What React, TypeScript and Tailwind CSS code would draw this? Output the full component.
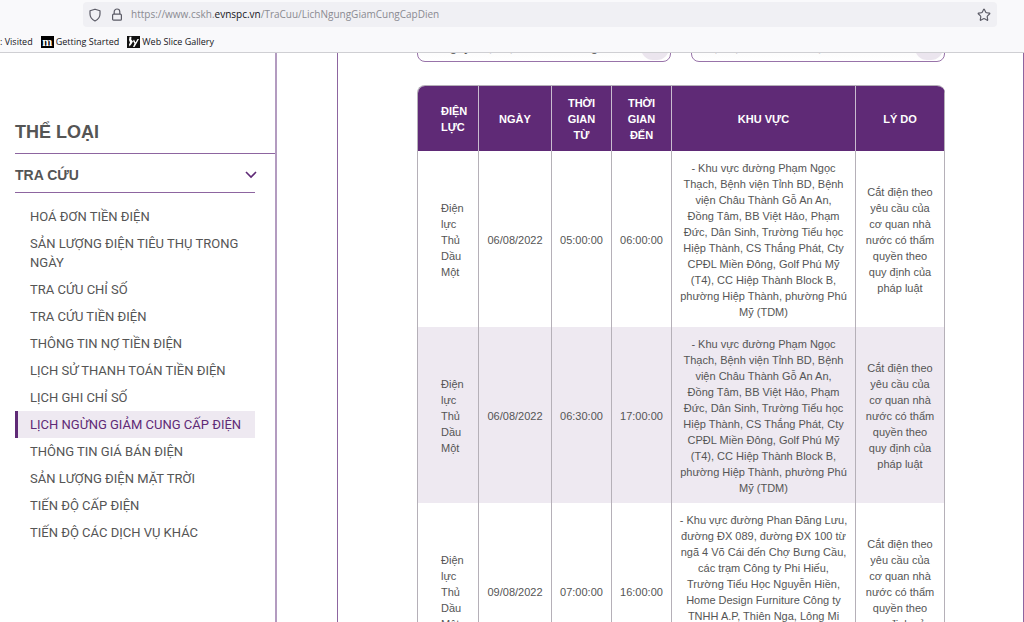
import { useState } from 'react';
import { Star } from 'lucide-react';

type Outage = {
  id: number;
  unit: string;
  date: string;
  from: string;
  to: string;
  area: string;
  reason: string;
};

const REASON = 'Cắt điện theo yêu cầu của cơ quan nhà nước có thẩm quyền theo quy định của pháp luật';
const AREA_PHU_MY = [
  '- Khu vực đường Phạm Ngọc',
  'Thạch, Bệnh viện Tỉnh BD, Bệnh',
  'viện Châu Thành Gỗ An An,',
  'Đồng Tâm, BB Việt Hảo, Phạm',
  'Đức, Dân Sinh, Trường Tiểu học',
  'Hiệp Thành, CS Thắng Phát, Cty',
  'CPĐL Miền Đông, Golf Phú Mỹ',
  '(T4), CC Hiệp Thành Block B,',
  'phường Hiệp Thành, phường Phú',
  'Mỹ (TDM)',
].join('\n');
const AREA_DX = [
  '- Khu vực đường Phan Đăng Lưu,',
  'đường ĐX 089, đường ĐX 100 từ',
  'ngã 4 Võ Cái đến Chợ Bưng Cầu,',
  'các trạm Công ty Phi Hiếu,',
  'Trường Tiểu Học Nguyễn Hiền,',
  'Home Design Furniture Công ty',
  'TNHH A.P, Thiên Nga, Lông Mi',
].join('\n');

const outages: Outage[] = [
  { id: 1, unit: 'Điện lực Thủ Dầu Một', date: '06/08/2022', from: '05:00:00', to: '06:00:00', area: AREA_PHU_MY, reason: REASON },
  { id: 2, unit: 'Điện lực Thủ Dầu Một', date: '06/08/2022', from: '06:30:00', to: '17:00:00', area: AREA_PHU_MY, reason: REASON },
  { id: 3, unit: 'Điện lực Thủ Dầu Một', date: '09/08/2022', from: '07:00:00', to: '16:00:00', area: AREA_DX, reason: REASON },
];

const menu = [
  'HOÁ ĐƠN TIỀN ĐIỆN',
  'SẢN LƯỢNG ĐIỆN TIÊU THỤ TRONG NGÀY',
  'TRA CỨU CHỈ SỐ',
  'TRA CỨU TIỀN ĐIỆN',
  'THÔNG TIN NỢ TIỀN ĐIỆN',
  'LỊCH SỬ THANH TOÁN TIỀN ĐIỆN',
  'LỊCH GHI CHỈ SỐ',
  'LỊCH NGỪNG GIẢM CUNG CẤP ĐIỆN',
  'THÔNG TIN GIÁ BÁN ĐIỆN',
  'SẢN LƯỢNG ĐIỆN MẶT TRỜI',
  'TIẾN ĐỘ CẤP ĐIỆN',
  'TIẾN ĐỘ CÁC DỊCH VỤ KHÁC',
];

function BrowserBar() {
  return (
    <header className="shrink-0 border-b border-[#cfcfd3] bg-[#f9f9fb] font-['Open_Sans',sans-serif]">
      <div className="pt-[2px] pr-[27px] pl-[83px]">
        <div className="flex h-[25px] items-center rounded-sm bg-[#f0f0f4] px-1.5 text-[10px] text-[#8a8a91]">
          <svg viewBox="0 0 12 14" className="h-3.5 w-3 shrink-0" fill="none" stroke="#5b5b66" strokeWidth="1.2" strokeLinejoin="round">
            <path d="M6 1.2 11 2.8V6c0 3.2-1.8 5.4-5 7C2.8 11.4 1 9.2 1 6V2.8Z" />
          </svg>
          <svg viewBox="0 0 12 14" className="ml-2.5 h-3.5 w-3 shrink-0" fill="none" stroke="#5b5b66" strokeWidth="1.2">
            <rect x="1.6" y="6.2" width="8.8" height="6" rx="1" />
            <path d="M3.2 6V3.8a2.8 2.8 0 0 1 5.6 0V6" />
          </svg>
          <p className="ml-2 flex-1 truncate">
            https://www.cskh.<span className="text-[#15141a]">evnspc.vn</span>/TraCuu/LichNgungGiamCungCapDien
          </p>
          <button type="button" aria-label="Bookmark">
            <Star className="size-3.5 text-[#5b5b66]" strokeWidth={2} />
          </button>
        </div>
      </div>
      <nav className="flex h-[25px] items-center gap-2 pt-1 text-[9px] text-[#15141a]">
        <a href="#visited">: Visited</a>
        <a href="#start" className="flex items-center gap-[2px]">
          <span className="flex h-3 w-[13px] items-center justify-center bg-black font-['Liberation_Serif',serif] text-[12px] leading-none font-bold text-white">
            m
          </span>
          Getting Started
        </a>
        <a href="#slice" className="flex items-center gap-[2px]">
          <svg viewBox="0 0 13 12" className="h-3 w-[13px]">
            <rect width="13" height="12" fill="#111" />
            <path d="M2.500 .8h2L4.200 3.500 6 5.500 4.500 8 2.500 10.500 2 8.500l1-2L2 4ZM7 3.500l1.500 3L10.500 3H12L9.500 7.500 7.500 11H6L7.500 7.500 6 5Z" fill="#fff" />
          </svg>
          Web Slice Gallery
        </a>
      </nav>
    </header>
  );
}

function Sidebar() {
  const [active, setActive] = useState(menu[7]);

  return (
    <aside className="w-[277px] shrink-0 border-r-2 border-[#b39bc0] pl-[15px] text-[#555]">
      <h2 className="border-b border-[#8d65a0] pt-[67px] pb-[9px] text-[18px] leading-6 font-bold">THỂ LOẠI</h2>
      <div className="pr-[20px]">
        <button
          type="button"
          className="flex w-full items-center justify-between border-b border-[#8d65a0] pt-3 pb-2 text-[14px] leading-[18px] font-bold"
        >
          TRA CỨU
          <svg viewBox="0 0 12 8" className="-mr-0.5 h-2 w-3" fill="none" stroke="#5f2a76" strokeWidth="1.6">
            <path d="m1 1 5 5 5-5" />
          </svg>
        </button>
        <ul className="pt-[10px] font-['Roboto','Liberation_Sans',sans-serif]">
          {menu.map((item) => (
            <li key={item}>
              <a
                href="#lich"
                onClick={() => setActive(item)}
                className={`block border-l-[3px] py-1 pl-3 text-[13px] leading-[19px] ${
                  item === active ? 'border-[#5f2a76] bg-[#eee9f1] text-[#5f2a76]' : 'border-transparent'
                }`}
              >
                {item}
              </a>
            </li>
          ))}
        </ul>
      </div>
    </aside>
  );
}

function Filter({ label, value }: { label: string; value: string }) {
  return (
    <label className="relative block flex-1">
      <select
        aria-label={label}
        className="block h-9 w-full appearance-none rounded-lg border border-[#9873a9] bg-linear-to-b from-[#f5f5f5] to-white pt-1.5 pl-2 text-[13px] text-[#555]"
      >
        <option>{value}</option>
      </select>
      <span className="pointer-events-none absolute inset-y-0.5 right-0.5 w-7 rounded-xl bg-[#ebe5ee]" />
    </label>
  );
}

export default function App() {
  return (
    <div className="flex h-screen flex-col overflow-hidden bg-white font-['Liberation_Sans',Arial,sans-serif]">
      <BrowserBar />
      <div className="flex min-h-0 flex-1 gap-[60px] overflow-hidden">
        <Sidebar />
        <main className="min-w-0 flex-1 border-x border-[#8d65a0] pr-[78px] pl-[79px]">
          <form className="-mt-[27px] flex gap-5">
            <Filter label="Công ty" value="Công ty Điện lực Bình Dương" />
            <Filter label="Điện lực" value="Điện lực Thủ Dầu Một" />
          </form>

          <div className="mt-[23px] overflow-hidden rounded-t-lg border-t border-l border-[#b5b0b8]">
            <table className="w-full table-fixed border-separate border-spacing-0 text-center text-[11px] leading-4 text-[#555]">
              <thead>
                <tr className="h-[65px] bg-[#5f2a76] text-white">
                  <th className="w-[61px] border-r border-[#c9bccf] pr-2 pl-[23px] text-left">ĐIỆN LỰC</th>
                  <th className="w-[73px] border-r border-[#c9bccf] px-2">NGÀY</th>
                  <th className="w-[60px] border-r border-[#c9bccf] px-3">THỜI GIAN TỪ</th>
                  <th className="w-[60px] border-r border-[#c9bccf] px-3">THỜI GIAN ĐẾN</th>
                  <th className="border-r border-[#c9bccf] px-2">KHU VỰC</th>
                  <th className="w-[89px] border-r border-[#b5b0b8] px-2">LÝ DO</th>
                </tr>
              </thead>
              <tbody>
                {outages.map((row) => (
                  <tr key={row.id} className="h-44 even:bg-[#eee9f1]">
                    <td className="border-r border-[#b5b0b8] pt-0.5 pr-2 pl-[23px] text-left">{row.unit}</td>
                    <td className="border-r border-[#b5b0b8] pt-0.5">{row.date}</td>
                    <td className="border-r border-[#b5b0b8] pt-0.5">{row.from}</td>
                    <td className="border-r border-[#b5b0b8] pt-0.5">{row.to}</td>
                    <td className="border-r border-[#b5b0b8] px-1 pt-[9px] align-top whitespace-pre-line">{row.area}</td>
                    <td className="border-r border-[#b5b0b8] px-2 pt-0.5">{row.reason}</td>
                  </tr>
                ))}
              </tbody>
            </table>
          </div>
        </main>
      </div>
    </div>
  );
}
